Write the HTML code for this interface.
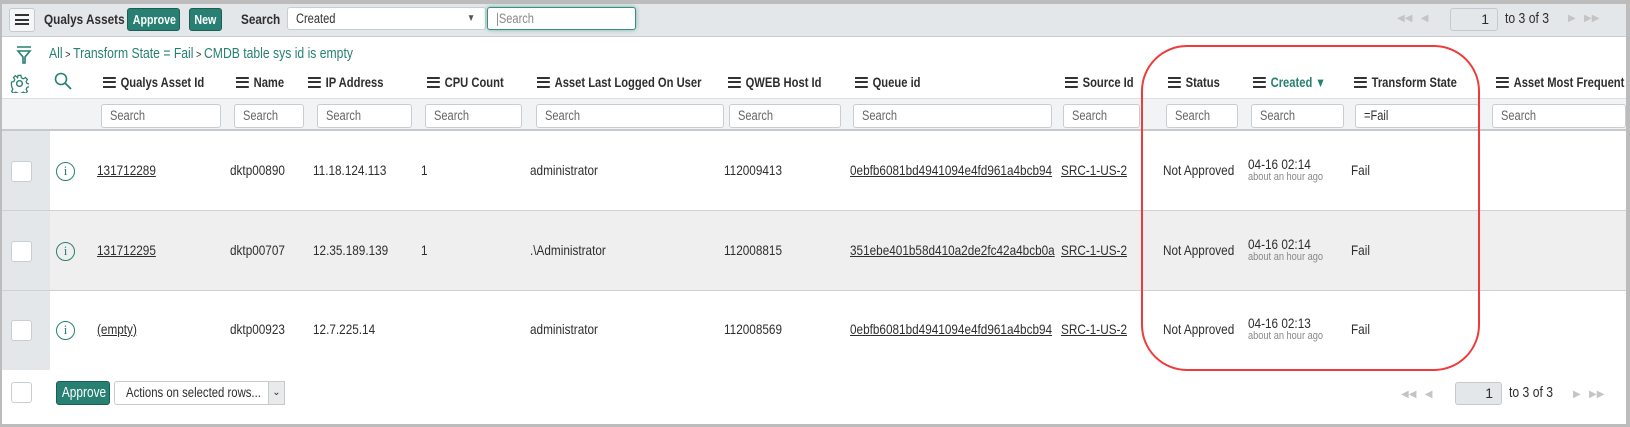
<!DOCTYPE html>
<html><head><meta charset="utf-8"><style>
*{box-sizing:border-box;margin:0;padding:0}
body{width:1630px;height:427px;background:#fff;position:relative;overflow:hidden;font-family:"Liberation Sans",sans-serif;font-size:14px;color:#2e2e2e}
.a{position:absolute;white-space:nowrap}
.s{transform:scaleX(.84);transform-origin:0 50%}
.btn{position:absolute;background:#278071;color:#fff;border:1px solid #1d5e54;border-radius:3px;font-weight:bold;text-align:center;font-size:13px;overflow:hidden}
.btn span,.inp span{display:inline-block;transform:scaleX(.82);transform-origin:50% 50%}
.inp span{transform-origin:0 50%}
.inp{position:absolute;background:#fff;border:1px solid #c8cdd1;border-radius:3px;height:24px;line-height:22px;padding-left:8px;color:#666;font-size:13.5px}
.hd{position:absolute;top:74px;font-weight:bold;font-size:14px;white-space:nowrap;transform:scaleX(.8);transform-origin:0 50%}
.hd i{display:inline-block;width:16px;height:11px;border-top:2.5px solid #333;border-bottom:2.5px solid #333;position:relative;margin-right:6px;vertical-align:-1px}
.hd i:after{content:"";position:absolute;left:0;right:0;top:2px;border-top:2.5px solid #333}
.cb{position:absolute;left:11px;width:21px;height:21px;border:1px solid #c9ced2;border-radius:3px;background:#fff}
.u{text-decoration:underline}
.info{position:absolute;left:56px;width:19px;height:19px;border:1.8px solid #278071;border-radius:50%;color:#278071;font-size:13px;text-align:center;line-height:16px;font-family:"Liberation Serif",serif}
.sm{font-size:11px;color:#888;display:block;line-height:11px}
.pg{color:#c4c4c4;font-size:10px}
</style></head><body>
<div class="a" style="left:0;top:0;width:1630px;height:4px;background:#bcbcbc"></div>
<div class="a" style="left:0;top:0;width:2px;height:427px;background:#bcbcbc"></div>
<div class="a" style="left:1626px;top:0;width:4px;height:427px;background:#bcbcbc"></div>
<div class="a" style="left:0;top:424px;width:1630px;height:3px;background:#bcbcbc"></div>
<div class="a" style="left:2px;top:4px;width:1624px;height:33px;background:#e4e7ea;border-bottom:1px solid #c9cdd1"></div>
<div class="a" style="left:9px;top:8px;width:26px;height:24px;background:#f5f6f7;border:1px solid #c6cacd;border-radius:3px"></div>
<div class="a" style="left:15px;top:14px;width:14px;height:11px;border-top:2.5px solid #333;border-bottom:2.5px solid #333"></div>
<div class="a" style="left:15px;top:18.5px;width:14px;border-top:2.5px solid #333"></div>
<div class="a s" style="left:44px;top:11px;font-weight:bold;font-size:14px">Qualys Assets</div>
<div class="btn" style="left:127px;top:8px;width:53px;height:23px;line-height:21px"><span>Approve</span></div>
<div class="btn" style="left:189px;top:8px;width:33px;height:23px;line-height:21px"><span>New</span></div>
<div class="a s" style="left:241px;top:11px;font-weight:bold;font-size:14px">Search</div>
<div class="inp" style="left:287px;top:7px;width:199px;height:23px;color:#333"><span>Created</span><span style="position:absolute;right:8px;font-size:10px;color:#555;top:0">▼</span></div>
<div class="inp" style="left:487px;top:7px;width:149px;height:23px;border:1.5px solid #3e8e80;box-shadow:0 0 4px #6fb3a6;color:#888"><span>|Search</span></div>
<div class="a pg" style="left:1397px;top:13px">◀◀&nbsp;&nbsp;&nbsp;◀</div>
<div class="a" style="left:1450px;top:8px;width:48px;height:23px;border:1px solid #c6cacd;border-radius:3px;background:#e4e7ea;text-align:right;padding-right:8px;line-height:21px">1</div>
<div class="a s" style="left:1505px;top:11px;font-size:14.5px">to 3 of 3</div>
<div class="a pg" style="left:1568px;top:13px">▶&nbsp;&nbsp;&nbsp;▶▶</div>
<svg class="a" style="left:16px;top:45px" width="16" height="20" viewBox="0 0 16 20"><path d="M1 2h14M2 6h12L9 12v6H7v-6z" fill="none" stroke="#278071" stroke-width="1.6"/></svg>
<div class="a s" style="left:49px;top:46px;color:#278071;font-size:14.5px">All<span style="color:#333;font-size:11px"> &gt; </span>Transform State = Fail<span style="color:#333;font-size:11px"> &gt; </span>CMDB table sys id is empty</div>
<svg class="a" style="left:10px;top:74px" width="19" height="19" viewBox="0 0 20 20"><circle cx="10" cy="10" r="3" fill="none" stroke="#278071" stroke-width="1.5"/><path d="M8.5 1.5h3l.5 2.5 2 1 2.3-1.3 2 2-1.3 2.3 1 2 2.5.5v3l-2.5.5-1 2 1.3 2.3-2 2-2.3-1.3-2 1-.5 2.5h-3l-.5-2.5-2-1-2.3 1.3-2-2 1.3-2.3-1-2L1.5 11.5v-3l2.5-.5 1-2-1.3-2.3 2-2L8 4z" fill="none" stroke="#278071" stroke-width="1.3"/></svg>
<svg class="a" style="left:54px;top:72px" width="18" height="18" viewBox="0 0 18 18"><circle cx="7" cy="7" r="5.5" fill="none" stroke="#278071" stroke-width="1.6"/><path d="M11 11l6 6" stroke="#278071" stroke-width="1.8"/></svg>
<div class="hd" style="left:103px"><i></i>Qualys Asset Id</div>
<div class="hd" style="left:236px"><i></i>Name</div>
<div class="hd" style="left:308px"><i></i>IP Address</div>
<div class="hd" style="left:427px"><i></i>CPU Count</div>
<div class="hd" style="left:537px"><i></i>Asset Last Logged On User</div>
<div class="hd" style="left:728px"><i></i>QWEB Host Id</div>
<div class="hd" style="left:855px"><i></i>Queue id</div>
<div class="hd" style="left:1065px"><i></i>Source Id</div>
<div class="hd" style="left:1168px"><i></i>Status</div>
<div class="hd" style="left:1253px;color:#278071"><i></i>Created <span style="font-size:13px">▼</span></div>
<div class="hd" style="left:1354px"><i></i>Transform State</div>
<div class="hd" style="left:1496px"><i></i>Asset Most Frequent</div>
<div class="a" style="left:2px;top:98px;width:1624px;height:33px;background:#f2f3f4;border-top:1px solid #dcdfe2;border-bottom:2px solid #c6c9cc"></div>
<div class="inp" style="left:101px;top:104px;width:120px"><span>Search</span></div>
<div class="inp" style="left:234px;top:104px;width:70px"><span>Search</span></div>
<div class="inp" style="left:317px;top:104px;width:95px"><span>Search</span></div>
<div class="inp" style="left:425px;top:104px;width:97px"><span>Search</span></div>
<div class="inp" style="left:536px;top:104px;width:188px"><span>Search</span></div>
<div class="inp" style="left:729px;top:104px;width:112px"><span>Search</span></div>
<div class="inp" style="left:853px;top:104px;width:199px"><span>Search</span></div>
<div class="inp" style="left:1063px;top:104px;width:77px"><span>Search</span></div>
<div class="inp" style="left:1166px;top:104px;width:72px"><span>Search</span></div>
<div class="inp" style="left:1251px;top:104px;width:93px"><span>Search</span></div>
<div class="inp" style="left:1355px;top:104px;width:124px;color:#333"><span>=Fail</span></div>
<div class="inp" style="left:1492px;top:104px;width:134px"><span>Search</span></div>
<div class="a" style="left:2px;top:131px;width:1624px;height:80px;background:#fff;border-bottom:1px solid #cfd2d5"></div>
<div class="a" style="left:2px;top:211px;width:1624px;height:80px;background:#efefef;border-bottom:1px solid #cfd2d5"></div>
<div class="a" style="left:2px;top:291px;width:1624px;height:79px;background:#fff"></div>
<div class="a" style="left:2px;top:131px;width:48px;height:239px;background:#e4e7ea"></div>
<div class="a" style="left:2px;top:210px;width:48px;height:1px;background:#cfd2d5"></div>
<div class="a" style="left:2px;top:290px;width:48px;height:1px;background:#cfd2d5"></div>

<div class="cb" style="top:161px"></div><div class="info" style="top:162px">i</div>
<div class="a s u" style="left:97px;top:162px">131712289</div>
<div class="a s" style="left:230px;top:162px">dktp00890</div>
<div class="a s" style="left:313px;top:162px">11.18.124.113</div>
<div class="a s" style="left:421px;top:162px">1</div>
<div class="a s" style="left:530px;top:162px">administrator</div>
<div class="a s" style="left:724px;top:162px">112009413</div>
<div class="a s u" style="left:850px;top:162px">0ebfb6081bd4941094e4fd961a4bcb94</div>
<div class="a s u" style="left:1061px;top:162px">SRC-1-US-2</div>
<div class="a s" style="left:1163px;top:162px">Not Approved</div>
<div class="a s" style="left:1248px;top:156px">04-16 02:14<span class="sm">about an hour ago</span></div>
<div class="a s" style="left:1351px;top:162px">Fail</div>

<div class="cb" style="top:241px"></div><div class="info" style="top:242px">i</div>
<div class="a s u" style="left:97px;top:242px">131712295</div>
<div class="a s" style="left:230px;top:242px">dktp00707</div>
<div class="a s" style="left:313px;top:242px">12.35.189.139</div>
<div class="a s" style="left:421px;top:242px">1</div>
<div class="a s" style="left:530px;top:242px">.\Administrator</div>
<div class="a s" style="left:724px;top:242px">112008815</div>
<div class="a s u" style="left:850px;top:242px">351ebe401b58d410a2de2fc42a4bcb0a</div>
<div class="a s u" style="left:1061px;top:242px">SRC-1-US-2</div>
<div class="a s" style="left:1163px;top:242px">Not Approved</div>
<div class="a s" style="left:1248px;top:236px">04-16 02:14<span class="sm">about an hour ago</span></div>
<div class="a s" style="left:1351px;top:242px">Fail</div>

<div class="cb" style="top:320px"></div><div class="info" style="top:321px">i</div>
<div class="a s u" style="left:97px;top:321px">(empty)</div>
<div class="a s" style="left:230px;top:321px">dktp00923</div>
<div class="a s" style="left:313px;top:321px">12.7.225.14</div>
<div class="a s" style="left:530px;top:321px">administrator</div>
<div class="a s" style="left:724px;top:321px">112008569</div>
<div class="a s u" style="left:850px;top:321px">0ebfb6081bd4941094e4fd961a4bcb94</div>
<div class="a s u" style="left:1061px;top:321px">SRC-1-US-2</div>
<div class="a s" style="left:1163px;top:321px">Not Approved</div>
<div class="a s" style="left:1248px;top:315px">04-16 02:13<span class="sm">about an hour ago</span></div>
<div class="a s" style="left:1351px;top:321px">Fail</div>

<div class="cb" style="top:382px"></div>
<div class="btn" style="left:56px;top:381px;width:54px;height:24px;line-height:22px;font-weight:normal;font-size:14.5px"><span>Approve</span></div>
<div class="a" style="left:114px;top:381px;width:171px;height:24px;border:1px solid #c6cacd;border-radius:3px;background:#fff;padding-left:11px;line-height:22px;font-size:13.5px"><span style="display:inline-block;transform:scaleX(.84);transform-origin:0 50%">Actions on selected rows...</span></div>
<div class="a" style="left:268px;top:381px;width:17px;height:24px;border:1px solid #c6cacd;background:#e8eaec;text-align:center;font-size:10px;line-height:22px">⌄</div>
<div class="a pg" style="left:1401px;top:389px">◀◀&nbsp;&nbsp;&nbsp;◀</div>
<div class="a" style="left:1455px;top:382px;width:47px;height:23px;border:1px solid #c6cacd;border-radius:3px;background:#e4e7ea;text-align:right;padding-right:8px;line-height:21px">1</div>
<div class="a s" style="left:1509px;top:385px;font-size:14.5px">to 3 of 3</div>
<div class="a pg" style="left:1573px;top:389px">▶&nbsp;&nbsp;&nbsp;▶▶</div>
<div class="a" style="left:1141px;top:45px;width:339px;height:326px;border:2px solid #ee3b3b;border-radius:46px"></div>
</body></html>
